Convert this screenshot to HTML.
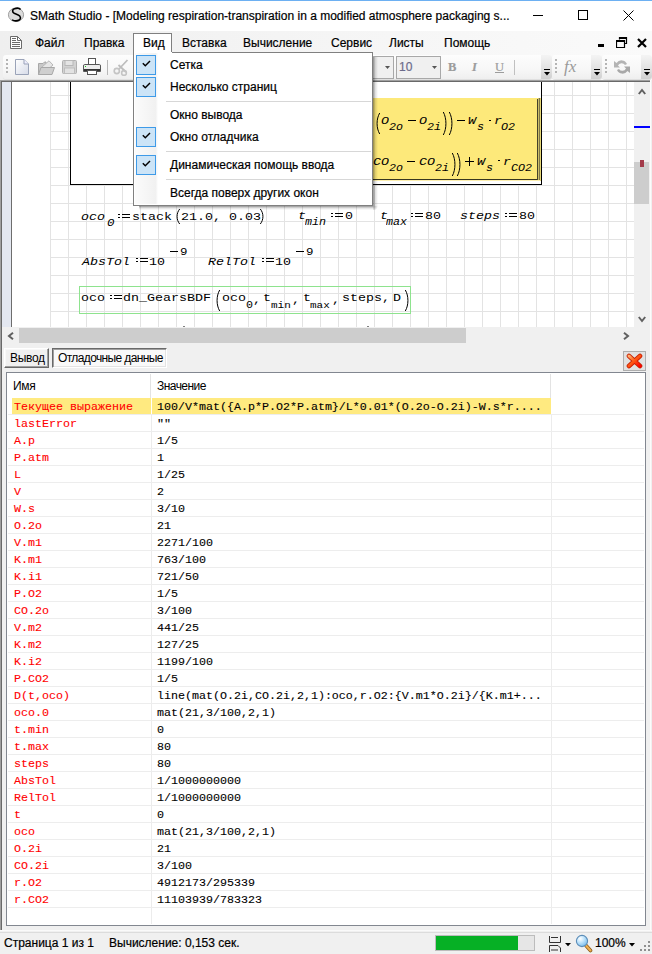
<!DOCTYPE html><html><head><meta charset="utf-8"><style>
*{box-sizing:border-box}
html,body{margin:0;padding:0}
body{width:652px;height:954px;position:relative;overflow:hidden;background:#f0f0f0;font-family:"Liberation Sans",sans-serif;font-size:12px;color:#000}
.a{position:absolute}
.t{position:absolute;white-space:pre;line-height:0;height:0;-webkit-text-stroke:0.2px currentColor}
.m{font-family:"Liberation Mono",monospace;-webkit-text-stroke:0}
.i{font-style:italic}
</style></head><body>
<div class="a" style="left:0px;top:0px;width:652px;height:31px;background:#fff;"></div>
<div class="a" style="left:0px;top:0px;width:652px;height:1px;background:#6db0f2;"></div>
<svg class="a" style="left:7px;top:7px" width="18" height="16" viewBox="0 0 18 16"><ellipse cx="9" cy="7.8" rx="7.6" ry="6.8" fill="#dcdcdc" stroke="#a0a0a0" stroke-width="1"/><path d="M13.6 2.4 C12.6 1.2 9.5 1 7.4 1.7 C5.2 2.5 4.9 5.2 7.2 6.3 L11.2 7.9 C13.9 9 14 12 12.2 13 C10.6 13.9 7.2 14 5 12.9" fill="none" stroke="#000" stroke-width="1.6"/></svg>
<div class="t " style="left:30px;top:15.84px;font-size:12px;">SMath Studio - [Modeling respiration-transpiration in a modified atmosphere packaging s...</div>
<div class="a" style="left:533px;top:15px;width:10px;height:1px;background:#000;"></div>
<div class="a" style="left:578px;top:10px;width:10px;height:10px;border:1px solid #000"></div>
<svg class="a" style="left:623px;top:10px" width="11" height="11" viewBox="0 0 11 11"><path d="M0.5 0.5 L10.5 10.5 M10.5 0.5 L0.5 10.5" stroke="#000" stroke-width="1"/></svg>
<div class="a" style="left:0px;top:31px;width:652px;height:49px;background:linear-gradient(to right,#efefef,#f6f6f6 60%,#fafafa);"></div>
<svg class="a" style="left:10px;top:36px" width="12" height="13" viewBox="0 0 12 13"><path d="M0.5 0.5 H7.5 L11.5 4.5 V12.5 H0.5 Z" fill="#fff" stroke="#6b6b6b"/><path d="M7.5 0.5 V4.5 H11.5" fill="none" stroke="#6b6b6b"/><path d="M2 2.5 H6 M2 4.5 H6 M2 6.5 H10 M2 8.5 H10 M2 10.5 H10" stroke="#6b6b6b"/></svg>
<div class="t " style="left:35px;top:42.84px;font-size:12px;">Файл</div>
<div class="t " style="left:84px;top:42.84px;font-size:12px;">Правка</div>
<div class="t " style="left:182px;top:42.84px;font-size:12px;">Вставка</div>
<div class="t " style="left:243px;top:42.84px;font-size:12px;">Вычисление</div>
<div class="t " style="left:331px;top:42.84px;font-size:12px;">Сервис</div>
<div class="t " style="left:389px;top:42.84px;font-size:12px;">Листы</div>
<div class="t " style="left:444px;top:42.84px;font-size:12px;">Помощь</div>
<div class="a" style="left:598px;top:44px;width:6px;height:3px;background:#000;"></div>
<svg class="a" style="left:616px;top:37px" width="12" height="11" viewBox="0 0 12 11"><path d="M3.5 2.5 V0.5 H10.5 V6.5 H8.5 M0.5 3.5 H8.5 V10.5 H0.5 Z M0.5 4.5 H8.5 M3.5 1.5 H10.5" fill="none" stroke="#000" stroke-width="1.2"/></svg>
<svg class="a" style="left:637px;top:38px" width="10" height="10" viewBox="0 0 10 10"><path d="M1 1 L9 9 M9 1 L1 9" stroke="#000" stroke-width="2.2"/></svg>
<div class="a" style="left:3px;top:55px;width:549px;height:24px;background:linear-gradient(#fdfdfd,#f7f7f7 60%,#efefef);border-radius:3px 3px 3px 3px;box-shadow:0 1px 0 #e0e0e0"></div>
<div class="a" style="left:541px;top:55px;width:11px;height:24px;background:linear-gradient(#f4f4f4,#dedede 70%,#cfcfcf);border-radius:0 3px 3px 0"></div>
<div class="a" style="left:544px;top:69px;width:6px;height:1px;background:#000;"></div>
<svg class="a" style="left:544px;top:72px" width="6" height="4" viewBox="0 0 6 4"><path d="M0 0 H6 L3 3.5Z" fill="#000"/></svg>
<div class="a" style="left:552px;top:55px;width:50px;height:24px;background:linear-gradient(#fdfdfd,#f7f7f7 60%,#efefef);border-radius:3px 3px 3px 3px;box-shadow:0 1px 0 #e0e0e0"></div>
<div class="a" style="left:591px;top:55px;width:11px;height:24px;background:linear-gradient(#f4f4f4,#dedede 70%,#cfcfcf);border-radius:0 3px 3px 0"></div>
<div class="a" style="left:594px;top:69px;width:6px;height:1px;background:#000;"></div>
<svg class="a" style="left:594px;top:72px" width="6" height="4" viewBox="0 0 6 4"><path d="M0 0 H6 L3 3.5Z" fill="#000"/></svg>
<div class="a" style="left:602px;top:55px;width:50px;height:24px;background:linear-gradient(#fdfdfd,#f7f7f7 60%,#efefef);border-radius:3px 3px 3px 3px;box-shadow:0 1px 0 #e0e0e0"></div>
<div class="a" style="left:641px;top:55px;width:11px;height:24px;background:linear-gradient(#f4f4f4,#dedede 70%,#cfcfcf);border-radius:0 3px 3px 0"></div>
<div class="a" style="left:644px;top:69px;width:6px;height:1px;background:#000;"></div>
<svg class="a" style="left:644px;top:72px" width="6" height="4" viewBox="0 0 6 4"><path d="M0 0 H6 L3 3.5Z" fill="#000"/></svg>
<div class="a" style="left:6px;top:59px;width:2px;height:2px;background:#b4b4b4;"></div>
<div class="a" style="left:6px;top:63px;width:2px;height:2px;background:#b4b4b4;"></div>
<div class="a" style="left:6px;top:67px;width:2px;height:2px;background:#b4b4b4;"></div>
<div class="a" style="left:6px;top:71px;width:2px;height:2px;background:#b4b4b4;"></div>
<div class="a" style="left:555px;top:59px;width:2px;height:2px;background:#b4b4b4;"></div>
<div class="a" style="left:555px;top:63px;width:2px;height:2px;background:#b4b4b4;"></div>
<div class="a" style="left:555px;top:67px;width:2px;height:2px;background:#b4b4b4;"></div>
<div class="a" style="left:555px;top:71px;width:2px;height:2px;background:#b4b4b4;"></div>
<div class="a" style="left:605px;top:59px;width:2px;height:2px;background:#b4b4b4;"></div>
<div class="a" style="left:605px;top:63px;width:2px;height:2px;background:#b4b4b4;"></div>
<div class="a" style="left:605px;top:67px;width:2px;height:2px;background:#b4b4b4;"></div>
<div class="a" style="left:605px;top:71px;width:2px;height:2px;background:#b4b4b4;"></div>
<svg class="a" style="left:15px;top:59px" width="15" height="17" viewBox="0 0 15 17"><defs><linearGradient id="gd" x1="0" y1="0" x2="1" y2="1"><stop offset="0" stop-color="#fff"/><stop offset="1" stop-color="#d6dbe8"/></linearGradient></defs><path d="M0.5 0.5 H9 L13.5 5 V15.5 H0.5 Z" fill="url(#gd)" stroke="#9aa3b8"/><path d="M9 0.5 V5 H13.5" fill="#eef" stroke="#9aa3b8"/></svg>
<svg class="a" style="left:38px;top:60px" width="17" height="15" viewBox="0 0 17 15"><path d="M0.5 3.5 H5 L6.5 2 H8 V14.5 H0.5 Z" fill="#c8c8c8" stroke="#a8a8a8"/><path d="M4 7 L11 0.8 L15 5 L8 11 Z" fill="#e6e6e6" stroke="#b8b8b8"/><path d="M0.5 14.5 L3 7.5 H16.5 L14 14.5 Z" fill="#cfcfcf" stroke="#a8a8a8"/></svg>
<svg class="a" style="left:62px;top:60px" width="15" height="14" viewBox="0 0 15 14"><rect x="0.5" y="0.5" width="14" height="13" rx="1" fill="#d2d2d2" stroke="#b0b0b0"/><rect x="3" y="0.5" width="8" height="5" fill="#e4e4e4" stroke="#b8b8b8"/><rect x="2.5" y="8" width="10" height="5.5" fill="#e2e2e2" stroke="#bdbdbd"/></svg>
<svg class="a" style="left:83px;top:58px" width="18" height="17" viewBox="0 0 18 17"><rect x="5.5" y="0.5" width="7" height="6" fill="#fff" stroke="#555"/><path d="M1.5 6.5 H16.5 Q17.5 6.5 17.5 8 V13.5 H0.5 V8 Q0.5 6.5 1.5 6.5 Z" fill="#ececec" stroke="#555"/><rect x="1" y="11" width="16" height="2" fill="#333"/><rect x="4.5" y="12.5" width="9" height="4" fill="#fff" stroke="#555"/><rect x="2" y="8" width="1" height="1" fill="#1c1"/></svg>
<div class="a" style="left:107px;top:60px;width:1px;height:15px;background:#b8b8b8;"></div>
<svg class="a" style="left:113px;top:59px" width="16" height="17" viewBox="0 0 16 17"><path d="M6 10 L14.5 1 M5.5 6 L13 13" stroke="#bdbdbd" stroke-width="1.8" fill="none"/><circle cx="3.8" cy="12" r="2.6" fill="none" stroke="#c4c4c4" stroke-width="1.6"/><circle cx="11" cy="14" r="2.4" fill="none" stroke="#c4c4c4" stroke-width="1.6"/></svg>
<div class="a" style="left:372px;top:56px;width:22px;height:23px;background:#f0f0f0;border:1px solid #a8a8a8;border-left:none"></div>
<svg class="a" style="left:385px;top:66px" width="5" height="3" viewBox="0 0 5 3"><path d="M0 0 H5 L2.5 3Z" fill="#555"/></svg>
<div class="a" style="left:396px;top:56px;width:45px;height:23px;background:#f0f0f0;border:1px solid #a8a8a8"></div>
<div class="t " style="left:399px;top:66.84px;font-size:12px;color:#6a6a8a">10</div>
<svg class="a" style="left:432px;top:66px" width="5" height="3" viewBox="0 0 5 3"><path d="M0 0 H5 L2.5 3Z" fill="#555"/></svg>
<div class="t " style="left:448px;top:66.67px;font-size:12.5px;color:#9c9c9c;font-weight:bold;font-family:Liberation Serif">B</div>
<div class="t " style="left:472px;top:66.67px;font-size:12.5px;color:#9c9c9c;font-style:italic;font-weight:bold;font-family:Liberation Serif">I</div>
<div class="t " style="left:495px;top:66.67px;font-size:12.5px;color:#9c9c9c;font-family:Liberation Serif">U</div>
<div class="a" style="left:495px;top:72px;width:9px;height:1px;background:#9c9c9c;"></div>
<div class="a" style="left:514px;top:60px;width:1px;height:15px;background:#c0c0c0;"></div>
<div class="t " style="left:564px;top:67.11px;font-size:17px;color:#9a9a9a;font-style:italic;font-family:Liberation Serif;-webkit-text-stroke:0">fx</div>
<svg class="a" style="left:613px;top:59px" width="18" height="16" viewBox="0 0 18 16"><path d="M14 5 A6 6 0 0 0 3.5 4 L1 2 V8.5 H7 L5 6.5 A4 4 0 0 1 12 6 Z" fill="#b4b4b4"/><path d="M4 11 A6 6 0 0 0 14.5 12 L17 14 V7.5 H11 L13 9.5 A4 4 0 0 1 6 10 Z" fill="#a8a8a8"/></svg>
<div class="a" style="left:0px;top:80px;width:652px;height:247px;background:#f0f0f0;"></div>
<div class="a" style="left:0px;top:80px;width:652px;height:1px;background:#a0a0a0;"></div>
<div class="a" style="left:0px;top:81px;width:652px;height:1px;background:#696969;"></div>
<div class="a" style="left:0px;top:80px;width:1px;height:850px;background:#a0a0a0;"></div>
<div class="a" style="left:1px;top:81px;width:1px;height:849px;background:#696969;"></div>
<div class="a" style="left:2px;top:82px;width:9px;height:245px;background:#e3e7f0;"></div>
<div class="a" style="left:11px;top:82px;width:1px;height:245px;background:#6d6d6d;"></div>
<div class="a" style="left:12px;top:82px;width:622px;height:245px;background-color:#fff;background-image:linear-gradient(to right,#e3e3e3 1px,transparent 1px),linear-gradient(to bottom,#e3e3e3 1px,transparent 1px);background-size:18px 18px;background-position:2px 13px;"></div>
<div class="a" style="left:12px;top:82px;width:38px;height:245px;background:#fff;"></div>
<div class="a" style="left:70px;top:82px;width:472px;height:103px;background:#fff;border:1px solid #000;border-top:none"></div>
<div class="a" style="left:300px;top:98px;width:241px;height:83px;background:#fde97a;"></div>
<div class="a" style="left:300px;top:180px;width:241px;height:1px;background:#fdf0b0;"></div>
<div class="a" style="left:300px;top:179px;width:238px;height:1px;background:#38361f;"></div>
<div class="a" style="left:537px;top:99px;width:1px;height:81px;background:#45422a;"></div>
<div class="a" style="left:538px;top:98px;width:1px;height:82px;background:#c9bd6a;"></div>
<div class="a" style="left:539px;top:98px;width:1px;height:82px;background:#7d7648;"></div>
<div class="a" style="left:540px;top:98px;width:1px;height:83px;background:#e8d978;"></div>
<svg class="a" style="left:376px;top:113px" width="4" height="21" viewBox="0 0 4 21"><path d="M3.7 0 C0.2 5.9 0.2 15.1 3.7 21" fill="none" stroke="#000" stroke-width="1.0"/></svg>
<div class="t m i" style="left:381px;top:121.00px;font-size:13.33px;transform:scaleY(0.88);transform-origin:0 3.00px;">O</div>
<div class="t m i" style="left:389px;top:127.37px;font-size:11.67px;transform:scaleY(0.88);transform-origin:0 2.63px;">2o</div>
<div class="a" style="left:408px;top:120px;width:8px;height:1px;background:#000;"></div>
<div class="t m i" style="left:419px;top:121.00px;font-size:13.33px;transform:scaleY(0.88);transform-origin:0 3.00px;">O</div>
<div class="t m i" style="left:427px;top:127.37px;font-size:11.67px;transform:scaleY(0.88);transform-origin:0 2.63px;">2i</div>
<svg class="a" style="left:443px;top:112px" width="4" height="23" viewBox="0 0 4 23"><path d="M0.3 0 C3.8 6.4 3.8 16.6 0.3 23" fill="none" stroke="#000" stroke-width="1.0"/></svg>
<svg class="a" style="left:449px;top:112px" width="4" height="23" viewBox="0 0 4 23"><path d="M0.3 0 C3.8 6.4 3.8 16.6 0.3 23" fill="none" stroke="#000" stroke-width="1.0"/></svg>
<div class="a" style="left:457px;top:120px;width:8px;height:1px;background:#000;"></div>
<div class="t m i" style="left:468px;top:121.00px;font-size:13.33px;transform:scaleY(0.88);transform-origin:0 3.00px;">W</div>
<div class="t m i" style="left:477px;top:127.37px;font-size:11.67px;transform:scaleY(0.88);transform-origin:0 2.63px;">s</div>
<div class="a" style="left:489px;top:120px;width:2px;height:1px;background:#000;"></div>
<div class="t m i" style="left:494px;top:121.00px;font-size:13.33px;transform:scaleY(0.88);transform-origin:0 3.00px;">r</div>
<div class="t m i" style="left:501px;top:127.37px;font-size:11.67px;transform:scaleY(0.88);transform-origin:0 2.63px;">O2</div>
<div class="t m i" style="left:373px;top:162.00px;font-size:13.33px;transform:scaleY(0.88);transform-origin:0 3.00px;">CO</div>
<div class="t m i" style="left:389px;top:167.87px;font-size:11.67px;transform:scaleY(0.88);transform-origin:0 2.63px;">2o</div>
<div class="a" style="left:407px;top:161px;width:8px;height:1px;background:#000;"></div>
<div class="t m i" style="left:419px;top:162.00px;font-size:13.33px;transform:scaleY(0.88);transform-origin:0 3.00px;">CO</div>
<div class="t m i" style="left:435px;top:167.87px;font-size:11.67px;transform:scaleY(0.88);transform-origin:0 2.63px;">2i</div>
<svg class="a" style="left:452px;top:153px" width="4" height="23" viewBox="0 0 4 23"><path d="M0.3 0 C3.8 6.4 3.8 16.6 0.3 23" fill="none" stroke="#000" stroke-width="1.0"/></svg>
<svg class="a" style="left:457px;top:153px" width="4" height="23" viewBox="0 0 4 23"><path d="M0.3 0 C3.8 6.4 3.8 16.6 0.3 23" fill="none" stroke="#000" stroke-width="1.0"/></svg>
<div class="a" style="left:465px;top:161px;width:9px;height:1px;background:#000;"></div>
<div class="a" style="left:469px;top:157px;width:1px;height:9px;background:#000;"></div>
<div class="t m i" style="left:477px;top:162.00px;font-size:13.33px;transform:scaleY(0.88);transform-origin:0 3.00px;">W</div>
<div class="t m i" style="left:486px;top:167.87px;font-size:11.67px;transform:scaleY(0.88);transform-origin:0 2.63px;">s</div>
<div class="a" style="left:498px;top:160px;width:2px;height:1px;background:#000;"></div>
<div class="t m i" style="left:503px;top:162.00px;font-size:13.33px;transform:scaleY(0.88);transform-origin:0 3.00px;">r</div>
<div class="t m i" style="left:511px;top:167.87px;font-size:11.67px;transform:scaleY(0.88);transform-origin:0 2.63px;">CO2</div>
<div class="t m i" style="left:81px;top:217.00px;font-size:13.33px;transform:scaleY(0.88);transform-origin:0 3.00px;">oco</div>
<div class="t m i" style="left:107px;top:223.19px;font-size:12.5px;transform:scaleY(0.88);transform-origin:0 2.81px;">0</div>
<div class="a" style="left:118px;top:214px;width:2px;height:1px;background:#000;"></div>
<div class="a" style="left:122px;top:214px;width:8px;height:1px;background:#000;"></div>
<div class="a" style="left:118px;top:217px;width:2px;height:1px;background:#000;"></div>
<div class="a" style="left:122px;top:217px;width:8px;height:1px;background:#000;"></div>
<div class="t m" style="left:132px;top:217.00px;font-size:13.33px;transform:scaleY(0.88);transform-origin:0 3.00px;">stack</div>
<svg class="a" style="left:176px;top:209px" width="4" height="15" viewBox="0 0 4 15"><path d="M3.7 0 C0.2 4.2 0.2 10.8 3.7 15" fill="none" stroke="#000" stroke-width="1.0"/></svg>
<div class="t m" style="left:181px;top:217.00px;font-size:13.33px;transform:scaleY(0.88);transform-origin:0 3.00px;">21.0, 0.03</div>
<svg class="a" style="left:260px;top:209px" width="4" height="15" viewBox="0 0 4 15"><path d="M0.3 0 C3.8 4.2 3.8 10.8 0.3 15" fill="none" stroke="#000" stroke-width="1.0"/></svg>
<div class="t m i" style="left:298px;top:216.00px;font-size:13.33px;transform:scaleY(0.88);transform-origin:0 3.00px;">t</div>
<div class="t m i" style="left:305px;top:221.87px;font-size:11.67px;transform:scaleY(0.88);transform-origin:0 2.63px;">min</div>
<div class="a" style="left:331px;top:213px;width:2px;height:1px;background:#000;"></div>
<div class="a" style="left:335px;top:213px;width:8px;height:1px;background:#000;"></div>
<div class="a" style="left:331px;top:216px;width:2px;height:1px;background:#000;"></div>
<div class="a" style="left:335px;top:216px;width:8px;height:1px;background:#000;"></div>
<div class="t m" style="left:345px;top:216.00px;font-size:13.33px;transform:scaleY(0.88);transform-origin:0 3.00px;">0</div>
<div class="t m i" style="left:380px;top:216.00px;font-size:13.33px;transform:scaleY(0.88);transform-origin:0 3.00px;">t</div>
<div class="t m i" style="left:386px;top:221.87px;font-size:11.67px;transform:scaleY(0.88);transform-origin:0 2.63px;">max</div>
<div class="a" style="left:411px;top:213px;width:2px;height:1px;background:#000;"></div>
<div class="a" style="left:415px;top:213px;width:8px;height:1px;background:#000;"></div>
<div class="a" style="left:411px;top:216px;width:2px;height:1px;background:#000;"></div>
<div class="a" style="left:415px;top:216px;width:8px;height:1px;background:#000;"></div>
<div class="t m" style="left:425px;top:216.00px;font-size:13.33px;transform:scaleY(0.88);transform-origin:0 3.00px;">80</div>
<div class="t m i" style="left:460px;top:216.00px;font-size:13.33px;transform:scaleY(0.88);transform-origin:0 3.00px;">steps</div>
<div class="a" style="left:505px;top:213px;width:2px;height:1px;background:#000;"></div>
<div class="a" style="left:509px;top:213px;width:8px;height:1px;background:#000;"></div>
<div class="a" style="left:505px;top:216px;width:2px;height:1px;background:#000;"></div>
<div class="a" style="left:509px;top:216px;width:8px;height:1px;background:#000;"></div>
<div class="t m" style="left:519px;top:216.00px;font-size:13.33px;transform:scaleY(0.88);transform-origin:0 3.00px;">80</div>
<div class="t m i" style="left:82px;top:262.00px;font-size:13.33px;transform:scaleY(0.88);transform-origin:0 3.00px;">AbsTol</div>
<div class="a" style="left:136px;top:258px;width:2px;height:1px;background:#000;"></div>
<div class="a" style="left:140px;top:258px;width:8px;height:1px;background:#000;"></div>
<div class="a" style="left:136px;top:261px;width:2px;height:1px;background:#000;"></div>
<div class="a" style="left:140px;top:261px;width:8px;height:1px;background:#000;"></div>
<div class="t m" style="left:149px;top:262.00px;font-size:13.33px;transform:scaleY(0.88);transform-origin:0 3.00px;">10</div>
<div class="a" style="left:170px;top:251px;width:8px;height:1px;background:#000;"></div>
<div class="t m" style="left:180px;top:252.19px;font-size:12.5px;transform:scaleY(0.88);transform-origin:0 2.81px;">9</div>
<div class="t m i" style="left:208px;top:262.00px;font-size:13.33px;transform:scaleY(0.88);transform-origin:0 3.00px;">RelTol</div>
<div class="a" style="left:262px;top:258px;width:2px;height:1px;background:#000;"></div>
<div class="a" style="left:266px;top:258px;width:8px;height:1px;background:#000;"></div>
<div class="a" style="left:262px;top:261px;width:2px;height:1px;background:#000;"></div>
<div class="a" style="left:266px;top:261px;width:8px;height:1px;background:#000;"></div>
<div class="t m" style="left:275px;top:262.00px;font-size:13.33px;transform:scaleY(0.88);transform-origin:0 3.00px;">10</div>
<div class="a" style="left:296px;top:251px;width:8px;height:1px;background:#000;"></div>
<div class="t m" style="left:306px;top:252.19px;font-size:12.5px;transform:scaleY(0.88);transform-origin:0 2.81px;">9</div>
<div class="a" style="left:79px;top:286px;width:332px;height:28px;border:1px solid #8ee38e"></div>
<div class="t m" style="left:81px;top:298.00px;font-size:13.33px;transform:scaleY(0.88);transform-origin:0 3.00px;">oco</div>
<div class="a" style="left:110px;top:295px;width:2px;height:1px;background:#000;"></div>
<div class="a" style="left:114px;top:295px;width:8px;height:1px;background:#000;"></div>
<div class="a" style="left:110px;top:298px;width:2px;height:1px;background:#000;"></div>
<div class="a" style="left:114px;top:298px;width:8px;height:1px;background:#000;"></div>
<div class="t m" style="left:123px;top:298.00px;font-size:13.33px;transform:scaleY(0.88);transform-origin:0 3.00px;">dn_GearsBDF</div>
<svg class="a" style="left:216px;top:290px" width="4" height="21" viewBox="0 0 4 21"><path d="M3.7 0 C0.2 5.9 0.2 15.1 3.7 21" fill="none" stroke="#000" stroke-width="1.0"/></svg>
<div class="t m" style="left:222px;top:298.00px;font-size:13.33px;transform:scaleY(0.88);transform-origin:0 3.00px;">oco</div>
<div class="t m" style="left:246px;top:304.87px;font-size:11.67px;transform:scaleY(0.88);transform-origin:0 2.63px;">0</div>
<div class="t m" style="left:253px;top:299.50px;font-size:13.33px;transform:scaleY(0.88);transform-origin:0 3.00px;">,</div>
<div class="t m" style="left:263px;top:298.00px;font-size:13.33px;transform:scaleY(0.88);transform-origin:0 3.00px;">t</div>
<div class="t m" style="left:271px;top:304.52px;font-size:11px;transform:scaleY(0.88);transform-origin:0 2.48px;">min</div>
<div class="t m" style="left:292px;top:299.50px;font-size:13.33px;transform:scaleY(0.88);transform-origin:0 3.00px;">,</div>
<div class="t m" style="left:303px;top:298.00px;font-size:13.33px;transform:scaleY(0.88);transform-origin:0 3.00px;">t</div>
<div class="t m" style="left:310px;top:304.52px;font-size:11px;transform:scaleY(0.88);transform-origin:0 2.48px;">max</div>
<div class="t m" style="left:332px;top:299.50px;font-size:13.33px;transform:scaleY(0.88);transform-origin:0 3.00px;">,</div>
<div class="t m" style="left:342px;top:298.00px;font-size:13.33px;transform:scaleY(0.88);transform-origin:0 3.00px;">steps,</div>
<div class="t m" style="left:393px;top:298.00px;font-size:13.33px;transform:scaleY(0.88);transform-origin:0 3.00px;">D</div>
<svg class="a" style="left:405px;top:290px" width="4" height="21" viewBox="0 0 4 21"><path d="M0.3 0 C3.8 5.9 3.8 15.1 0.3 21" fill="none" stroke="#000" stroke-width="1.0"/></svg>
<div class="a" style="left:183px;top:326px;width:2px;height:1px;background:#808080;"></div>
<div class="a" style="left:367px;top:326px;width:2px;height:1px;background:#808080;"></div>
<div class="a" style="left:634px;top:82px;width:17px;height:245px;background:#f0f0f0;"></div>
<div class="a" style="left:634px;top:126px;width:17px;height:2px;background:#0000ff;"></div>
<div class="a" style="left:634px;top:162px;width:15px;height:42px;background:#cdcdcd;"></div>
<div class="a" style="left:640px;top:160px;width:4px;height:7px;background:#a33a4a;"></div>
<svg class="a" style="left:638px;top:88px" width="8" height="7" viewBox="0 0 8 7"><path d="M0.8 6 L4 2 L7.2 6" fill="none" stroke="#606060" stroke-width="2"/></svg>
<svg class="a" style="left:638px;top:316px" width="8" height="7" viewBox="0 0 8 7"><path d="M0.8 1 L4 5 L7.2 1" fill="none" stroke="#606060" stroke-width="2"/></svg>
<div class="a" style="left:2px;top:327px;width:632px;height:17px;background:#f0f0f0;"></div>
<div class="a" style="left:19px;top:328px;width:447px;height:15px;background:#cdcdcd;"></div>
<svg class="a" style="left:7px;top:332px" width="7" height="8" viewBox="0 0 7 8"><path d="M6 0.8 L2 4 L6 7.2" fill="none" stroke="#606060" stroke-width="2"/></svg>
<svg class="a" style="left:623px;top:332px" width="7" height="8" viewBox="0 0 7 8"><path d="M1 0.8 L5 4 L1 7.2" fill="none" stroke="#606060" stroke-width="2"/></svg>
<div class="a" style="left:650px;top:80px;width:2px;height:851px;background:#f0f0f0;border-left:1px solid #fcfcfc"></div>
<div class="a" style="left:4px;top:348px;width:45px;height:20px;background:#f0f0f0;border:1px solid;border-color:#fff #696969 #696969 #fff;box-shadow:inset -1px -1px 0 #a0a0a0, inset 1px 1px 0 #f8f8f8"></div>
<div class="t " style="left:10px;top:357.84px;font-size:12px;letter-spacing:-0.3px;-webkit-text-stroke:0">Вывод</div>
<div class="a" style="left:52px;top:348px;width:115px;height:20px;background:#f9f9f9;border:1px solid;border-color:#696969 #fff #fff #696969;box-shadow:inset 1px 1px 0 #a0a0a0, inset -1px -1px 0 #e3e3e3"></div>
<div class="t " style="left:58px;top:357.84px;font-size:12px;letter-spacing:-0.62px;-webkit-text-stroke:0">Отладочные данные</div>
<div class="a" style="left:623px;top:351px;width:23px;height:20px;background:#e1e1e1;border:1px solid #adadad"></div>
<svg class="a" style="left:626px;top:353px" width="17" height="16" viewBox="0 0 17 16"><defs><linearGradient id="xg" x1="0" y1="0" x2="1" y2="1"><stop offset="0" stop-color="#ffb070"/><stop offset="0.45" stop-color="#ff5a14"/><stop offset="1" stop-color="#ff0000"/></linearGradient></defs><path d="M3 3 L14 13 M14 3 L3 13" stroke="#c81e00" stroke-width="4.6" stroke-linecap="round"/><path d="M3 3 L14 13 M14 3 L3 13" stroke="url(#xg)" stroke-width="3" stroke-linecap="round"/></svg>
<div class="a" style="left:6px;top:372px;width:640px;height:554px;background:#fff;border:1px solid #828790"></div>
<div class="t " style="left:13px;top:385.84px;font-size:12px;letter-spacing:-0.3px;-webkit-text-stroke:0">Имя</div>
<div class="t " style="left:157px;top:385.84px;font-size:12px;letter-spacing:-0.55px;-webkit-text-stroke:0">Значение</div>
<div class="a" style="left:150px;top:374px;width:1px;height:24px;background:#e3e3e3;"></div>
<div class="a" style="left:151px;top:414px;width:1px;height:510px;background:#ececec;"></div>
<div class="a" style="left:550px;top:374px;width:1px;height:24px;background:#e3e3e3;"></div>
<div class="a" style="left:551px;top:414px;width:1px;height:510px;background:#ececec;"></div>
<div class="a" style="left:12px;top:398px;width:139px;height:16px;background:#ffea80;"></div>
<div class="a" style="left:152px;top:398px;width:399px;height:16px;background:#ffea80;"></div>
<div class="a" style="left:8px;top:414px;width:636px;height:1px;background:#ededed;"></div>
<div class="t m tb" style="left:14px;top:407.37px;font-size:11.67px;transform:scaleY(0.88);transform-origin:0 2.63px;color:#ff0000;-webkit-text-stroke:0.1px #ff0000">Текущее выражение</div>
<div class="t m tb" style="left:157px;top:407.37px;font-size:11.67px;transform:scaleY(0.88);transform-origin:0 2.63px;-webkit-text-stroke:0.1px #000">100/V*mat({A.p*P.O2*P.atm}/L*0.01*(O.2o-O.2i)-W.s*r....</div>
<div class="a" style="left:8px;top:431px;width:636px;height:1px;background:#ededed;"></div>
<div class="t m tb" style="left:14px;top:424.37px;font-size:11.67px;transform:scaleY(0.88);transform-origin:0 2.63px;color:#ff0000;-webkit-text-stroke:0.1px #ff0000">lastError</div>
<div class="t m tb" style="left:157px;top:424.37px;font-size:11.67px;transform:scaleY(0.88);transform-origin:0 2.63px;-webkit-text-stroke:0.1px #000">&quot;&quot;</div>
<div class="a" style="left:8px;top:448px;width:636px;height:1px;background:#ededed;"></div>
<div class="t m tb" style="left:14px;top:441.37px;font-size:11.67px;transform:scaleY(0.88);transform-origin:0 2.63px;color:#ff0000;-webkit-text-stroke:0.1px #ff0000">A.p</div>
<div class="t m tb" style="left:157px;top:441.37px;font-size:11.67px;transform:scaleY(0.88);transform-origin:0 2.63px;-webkit-text-stroke:0.1px #000">1/5</div>
<div class="a" style="left:8px;top:465px;width:636px;height:1px;background:#ededed;"></div>
<div class="t m tb" style="left:14px;top:458.37px;font-size:11.67px;transform:scaleY(0.88);transform-origin:0 2.63px;color:#ff0000;-webkit-text-stroke:0.1px #ff0000">P.atm</div>
<div class="t m tb" style="left:157px;top:458.37px;font-size:11.67px;transform:scaleY(0.88);transform-origin:0 2.63px;-webkit-text-stroke:0.1px #000">1</div>
<div class="a" style="left:8px;top:482px;width:636px;height:1px;background:#ededed;"></div>
<div class="t m tb" style="left:14px;top:475.37px;font-size:11.67px;transform:scaleY(0.88);transform-origin:0 2.63px;color:#ff0000;-webkit-text-stroke:0.1px #ff0000">L</div>
<div class="t m tb" style="left:157px;top:475.37px;font-size:11.67px;transform:scaleY(0.88);transform-origin:0 2.63px;-webkit-text-stroke:0.1px #000">1/25</div>
<div class="a" style="left:8px;top:499px;width:636px;height:1px;background:#ededed;"></div>
<div class="t m tb" style="left:14px;top:492.37px;font-size:11.67px;transform:scaleY(0.88);transform-origin:0 2.63px;color:#ff0000;-webkit-text-stroke:0.1px #ff0000">V</div>
<div class="t m tb" style="left:157px;top:492.37px;font-size:11.67px;transform:scaleY(0.88);transform-origin:0 2.63px;-webkit-text-stroke:0.1px #000">2</div>
<div class="a" style="left:8px;top:516px;width:636px;height:1px;background:#ededed;"></div>
<div class="t m tb" style="left:14px;top:509.37px;font-size:11.67px;transform:scaleY(0.88);transform-origin:0 2.63px;color:#ff0000;-webkit-text-stroke:0.1px #ff0000">W.s</div>
<div class="t m tb" style="left:157px;top:509.37px;font-size:11.67px;transform:scaleY(0.88);transform-origin:0 2.63px;-webkit-text-stroke:0.1px #000">3/10</div>
<div class="a" style="left:8px;top:533px;width:636px;height:1px;background:#ededed;"></div>
<div class="t m tb" style="left:14px;top:526.37px;font-size:11.67px;transform:scaleY(0.88);transform-origin:0 2.63px;color:#ff0000;-webkit-text-stroke:0.1px #ff0000">O.2o</div>
<div class="t m tb" style="left:157px;top:526.37px;font-size:11.67px;transform:scaleY(0.88);transform-origin:0 2.63px;-webkit-text-stroke:0.1px #000">21</div>
<div class="a" style="left:8px;top:550px;width:636px;height:1px;background:#ededed;"></div>
<div class="t m tb" style="left:14px;top:543.37px;font-size:11.67px;transform:scaleY(0.88);transform-origin:0 2.63px;color:#ff0000;-webkit-text-stroke:0.1px #ff0000">V.m1</div>
<div class="t m tb" style="left:157px;top:543.37px;font-size:11.67px;transform:scaleY(0.88);transform-origin:0 2.63px;-webkit-text-stroke:0.1px #000">2271/100</div>
<div class="a" style="left:8px;top:567px;width:636px;height:1px;background:#ededed;"></div>
<div class="t m tb" style="left:14px;top:560.37px;font-size:11.67px;transform:scaleY(0.88);transform-origin:0 2.63px;color:#ff0000;-webkit-text-stroke:0.1px #ff0000">K.m1</div>
<div class="t m tb" style="left:157px;top:560.37px;font-size:11.67px;transform:scaleY(0.88);transform-origin:0 2.63px;-webkit-text-stroke:0.1px #000">763/100</div>
<div class="a" style="left:8px;top:584px;width:636px;height:1px;background:#ededed;"></div>
<div class="t m tb" style="left:14px;top:577.37px;font-size:11.67px;transform:scaleY(0.88);transform-origin:0 2.63px;color:#ff0000;-webkit-text-stroke:0.1px #ff0000">K.i1</div>
<div class="t m tb" style="left:157px;top:577.37px;font-size:11.67px;transform:scaleY(0.88);transform-origin:0 2.63px;-webkit-text-stroke:0.1px #000">721/50</div>
<div class="a" style="left:8px;top:601px;width:636px;height:1px;background:#ededed;"></div>
<div class="t m tb" style="left:14px;top:594.37px;font-size:11.67px;transform:scaleY(0.88);transform-origin:0 2.63px;color:#ff0000;-webkit-text-stroke:0.1px #ff0000">P.O2</div>
<div class="t m tb" style="left:157px;top:594.37px;font-size:11.67px;transform:scaleY(0.88);transform-origin:0 2.63px;-webkit-text-stroke:0.1px #000">1/5</div>
<div class="a" style="left:8px;top:618px;width:636px;height:1px;background:#ededed;"></div>
<div class="t m tb" style="left:14px;top:611.37px;font-size:11.67px;transform:scaleY(0.88);transform-origin:0 2.63px;color:#ff0000;-webkit-text-stroke:0.1px #ff0000">CO.2o</div>
<div class="t m tb" style="left:157px;top:611.37px;font-size:11.67px;transform:scaleY(0.88);transform-origin:0 2.63px;-webkit-text-stroke:0.1px #000">3/100</div>
<div class="a" style="left:8px;top:635px;width:636px;height:1px;background:#ededed;"></div>
<div class="t m tb" style="left:14px;top:628.37px;font-size:11.67px;transform:scaleY(0.88);transform-origin:0 2.63px;color:#ff0000;-webkit-text-stroke:0.1px #ff0000">V.m2</div>
<div class="t m tb" style="left:157px;top:628.37px;font-size:11.67px;transform:scaleY(0.88);transform-origin:0 2.63px;-webkit-text-stroke:0.1px #000">441/25</div>
<div class="a" style="left:8px;top:652px;width:636px;height:1px;background:#ededed;"></div>
<div class="t m tb" style="left:14px;top:645.37px;font-size:11.67px;transform:scaleY(0.88);transform-origin:0 2.63px;color:#ff0000;-webkit-text-stroke:0.1px #ff0000">K.m2</div>
<div class="t m tb" style="left:157px;top:645.37px;font-size:11.67px;transform:scaleY(0.88);transform-origin:0 2.63px;-webkit-text-stroke:0.1px #000">127/25</div>
<div class="a" style="left:8px;top:669px;width:636px;height:1px;background:#ededed;"></div>
<div class="t m tb" style="left:14px;top:662.37px;font-size:11.67px;transform:scaleY(0.88);transform-origin:0 2.63px;color:#ff0000;-webkit-text-stroke:0.1px #ff0000">K.i2</div>
<div class="t m tb" style="left:157px;top:662.37px;font-size:11.67px;transform:scaleY(0.88);transform-origin:0 2.63px;-webkit-text-stroke:0.1px #000">1199/100</div>
<div class="a" style="left:8px;top:686px;width:636px;height:1px;background:#ededed;"></div>
<div class="t m tb" style="left:14px;top:679.37px;font-size:11.67px;transform:scaleY(0.88);transform-origin:0 2.63px;color:#ff0000;-webkit-text-stroke:0.1px #ff0000">P.CO2</div>
<div class="t m tb" style="left:157px;top:679.37px;font-size:11.67px;transform:scaleY(0.88);transform-origin:0 2.63px;-webkit-text-stroke:0.1px #000">1/5</div>
<div class="a" style="left:8px;top:703px;width:636px;height:1px;background:#ededed;"></div>
<div class="t m tb" style="left:14px;top:696.37px;font-size:11.67px;transform:scaleY(0.88);transform-origin:0 2.63px;color:#ff0000;-webkit-text-stroke:0.1px #ff0000">D(t,oco)</div>
<div class="t m tb" style="left:157px;top:696.37px;font-size:11.67px;transform:scaleY(0.88);transform-origin:0 2.63px;-webkit-text-stroke:0.1px #000">line(mat(O.2i,CO.2i,2,1):oco,r.O2:{V.m1*O.2i}/{K.m1+...</div>
<div class="a" style="left:8px;top:720px;width:636px;height:1px;background:#ededed;"></div>
<div class="t m tb" style="left:14px;top:713.37px;font-size:11.67px;transform:scaleY(0.88);transform-origin:0 2.63px;color:#ff0000;-webkit-text-stroke:0.1px #ff0000">oco.0</div>
<div class="t m tb" style="left:157px;top:713.37px;font-size:11.67px;transform:scaleY(0.88);transform-origin:0 2.63px;-webkit-text-stroke:0.1px #000">mat(21,3/100,2,1)</div>
<div class="a" style="left:8px;top:737px;width:636px;height:1px;background:#ededed;"></div>
<div class="t m tb" style="left:14px;top:730.37px;font-size:11.67px;transform:scaleY(0.88);transform-origin:0 2.63px;color:#ff0000;-webkit-text-stroke:0.1px #ff0000">t.min</div>
<div class="t m tb" style="left:157px;top:730.37px;font-size:11.67px;transform:scaleY(0.88);transform-origin:0 2.63px;-webkit-text-stroke:0.1px #000">0</div>
<div class="a" style="left:8px;top:754px;width:636px;height:1px;background:#ededed;"></div>
<div class="t m tb" style="left:14px;top:747.37px;font-size:11.67px;transform:scaleY(0.88);transform-origin:0 2.63px;color:#ff0000;-webkit-text-stroke:0.1px #ff0000">t.max</div>
<div class="t m tb" style="left:157px;top:747.37px;font-size:11.67px;transform:scaleY(0.88);transform-origin:0 2.63px;-webkit-text-stroke:0.1px #000">80</div>
<div class="a" style="left:8px;top:771px;width:636px;height:1px;background:#ededed;"></div>
<div class="t m tb" style="left:14px;top:764.37px;font-size:11.67px;transform:scaleY(0.88);transform-origin:0 2.63px;color:#ff0000;-webkit-text-stroke:0.1px #ff0000">steps</div>
<div class="t m tb" style="left:157px;top:764.37px;font-size:11.67px;transform:scaleY(0.88);transform-origin:0 2.63px;-webkit-text-stroke:0.1px #000">80</div>
<div class="a" style="left:8px;top:788px;width:636px;height:1px;background:#ededed;"></div>
<div class="t m tb" style="left:14px;top:781.37px;font-size:11.67px;transform:scaleY(0.88);transform-origin:0 2.63px;color:#ff0000;-webkit-text-stroke:0.1px #ff0000">AbsTol</div>
<div class="t m tb" style="left:157px;top:781.37px;font-size:11.67px;transform:scaleY(0.88);transform-origin:0 2.63px;-webkit-text-stroke:0.1px #000">1/1000000000</div>
<div class="a" style="left:8px;top:805px;width:636px;height:1px;background:#ededed;"></div>
<div class="t m tb" style="left:14px;top:798.37px;font-size:11.67px;transform:scaleY(0.88);transform-origin:0 2.63px;color:#ff0000;-webkit-text-stroke:0.1px #ff0000">RelTol</div>
<div class="t m tb" style="left:157px;top:798.37px;font-size:11.67px;transform:scaleY(0.88);transform-origin:0 2.63px;-webkit-text-stroke:0.1px #000">1/1000000000</div>
<div class="a" style="left:8px;top:822px;width:636px;height:1px;background:#ededed;"></div>
<div class="t m tb" style="left:14px;top:815.37px;font-size:11.67px;transform:scaleY(0.88);transform-origin:0 2.63px;color:#ff0000;-webkit-text-stroke:0.1px #ff0000">t</div>
<div class="t m tb" style="left:157px;top:815.37px;font-size:11.67px;transform:scaleY(0.88);transform-origin:0 2.63px;-webkit-text-stroke:0.1px #000">0</div>
<div class="a" style="left:8px;top:839px;width:636px;height:1px;background:#ededed;"></div>
<div class="t m tb" style="left:14px;top:832.37px;font-size:11.67px;transform:scaleY(0.88);transform-origin:0 2.63px;color:#ff0000;-webkit-text-stroke:0.1px #ff0000">oco</div>
<div class="t m tb" style="left:157px;top:832.37px;font-size:11.67px;transform:scaleY(0.88);transform-origin:0 2.63px;-webkit-text-stroke:0.1px #000">mat(21,3/100,2,1)</div>
<div class="a" style="left:8px;top:856px;width:636px;height:1px;background:#ededed;"></div>
<div class="t m tb" style="left:14px;top:849.37px;font-size:11.67px;transform:scaleY(0.88);transform-origin:0 2.63px;color:#ff0000;-webkit-text-stroke:0.1px #ff0000">O.2i</div>
<div class="t m tb" style="left:157px;top:849.37px;font-size:11.67px;transform:scaleY(0.88);transform-origin:0 2.63px;-webkit-text-stroke:0.1px #000">21</div>
<div class="a" style="left:8px;top:873px;width:636px;height:1px;background:#ededed;"></div>
<div class="t m tb" style="left:14px;top:866.37px;font-size:11.67px;transform:scaleY(0.88);transform-origin:0 2.63px;color:#ff0000;-webkit-text-stroke:0.1px #ff0000">CO.2i</div>
<div class="t m tb" style="left:157px;top:866.37px;font-size:11.67px;transform:scaleY(0.88);transform-origin:0 2.63px;-webkit-text-stroke:0.1px #000">3/100</div>
<div class="a" style="left:8px;top:890px;width:636px;height:1px;background:#ededed;"></div>
<div class="t m tb" style="left:14px;top:883.37px;font-size:11.67px;transform:scaleY(0.88);transform-origin:0 2.63px;color:#ff0000;-webkit-text-stroke:0.1px #ff0000">r.O2</div>
<div class="t m tb" style="left:157px;top:883.37px;font-size:11.67px;transform:scaleY(0.88);transform-origin:0 2.63px;-webkit-text-stroke:0.1px #000">4912173/295339</div>
<div class="a" style="left:8px;top:907px;width:636px;height:1px;background:#ededed;"></div>
<div class="t m tb" style="left:14px;top:900.37px;font-size:11.67px;transform:scaleY(0.88);transform-origin:0 2.63px;color:#ff0000;-webkit-text-stroke:0.1px #ff0000">r.CO2</div>
<div class="t m tb" style="left:157px;top:900.37px;font-size:11.67px;transform:scaleY(0.88);transform-origin:0 2.63px;-webkit-text-stroke:0.1px #000">11103939/783323</div>
<div class="a" style="left:0px;top:930px;width:652px;height:24px;background:#f0f0f0;border-top:1px solid #fafafa"></div>
<div class="a" style="left:0px;top:932px;width:652px;height:1px;background:#dcdcdc;"></div>
<div class="t " style="left:4px;top:942.84px;font-size:12px;">Страница 1 из 1</div>
<div class="t " style="left:109px;top:942.84px;font-size:12px;">Вычисление: 0,153 сек.</div>
<div class="a" style="left:435px;top:935px;width:100px;height:16px;background:#e6e6e6;border:1px solid #bcbcbc"></div>
<div class="a" style="left:436px;top:936px;width:82px;height:14px;background:#06b025;"></div>
<svg class="a" style="left:548px;top:935px" width="14" height="17" viewBox="0 0 14 17"><path d="M1.5 1 V7.5 H12.5 V1 M3 2.5 H10 M1.5 17 V10.5 H10 L12.5 13 V17 M3 15 H10" fill="none" stroke="#333" stroke-width="1"/></svg>
<svg class="a" style="left:565px;top:943px" width="6" height="4" viewBox="0 0 6 4"><path d="M0 0 H6 L3 3.2Z" fill="#000"/></svg>
<svg class="a" style="left:575px;top:934px" width="18" height="19" viewBox="0 0 18 19"><defs><radialGradient id="lg" cx="0.35" cy="0.3" r="0.7"><stop offset="0" stop-color="#ffffff"/><stop offset="0.5" stop-color="#bfe3fb"/><stop offset="1" stop-color="#7fc0ee"/></radialGradient></defs><path d="M11 11.5 L15.5 16.5" stroke="#8a5a18" stroke-width="3.6" stroke-linecap="round"/><path d="M11 11.5 L15.5 16.5" stroke="#f0b050" stroke-width="2" stroke-linecap="round"/><circle cx="7" cy="7" r="5.6" fill="url(#lg)" stroke="#5c8db8" stroke-width="1.1"/></svg>
<div class="t " style="left:595px;top:942.84px;font-size:12px;">100%</div>
<svg class="a" style="left:629px;top:943px" width="6" height="4" viewBox="0 0 6 4"><path d="M0 0 H6 L3 3.5Z" fill="#000"/></svg>
<div class="a" style="left:648px;top:941px;width:2px;height:2px;background:#8f8f8f;"></div>
<div class="a" style="left:644px;top:945px;width:2px;height:2px;background:#8f8f8f;"></div>
<div class="a" style="left:648px;top:945px;width:2px;height:2px;background:#8f8f8f;"></div>
<div class="a" style="left:640px;top:949px;width:2px;height:2px;background:#8f8f8f;"></div>
<div class="a" style="left:644px;top:949px;width:2px;height:2px;background:#8f8f8f;"></div>
<div class="a" style="left:648px;top:949px;width:2px;height:2px;background:#8f8f8f;"></div>
<div class="a" style="left:133px;top:33px;width:39px;height:20px;background:#fff;border:1px solid #808080;border-bottom:none"></div>
<div class="t " style="left:143px;top:42.84px;font-size:12px;">Вид</div>
<div class="a" style="left:373px;top:57px;width:5px;height:149px;background:linear-gradient(to right,rgba(0,0,0,0.42),rgba(0,0,0,0.12) 50%,rgba(0,0,0,0));"></div>
<div class="a" style="left:139px;top:206px;width:234px;height:4px;background:linear-gradient(to bottom,rgba(0,0,0,0.42),rgba(0,0,0,0.12) 50%,rgba(0,0,0,0));"></div>
<div class="a" style="left:373px;top:206px;width:5px;height:4px;background:radial-gradient(circle at 0 0,rgba(0,0,0,0.4),rgba(0,0,0,0) 5px);"></div>
<div class="a" style="left:133px;top:52px;width:240px;height:154px;background:#fff;border:1px solid #808080"></div>
<div class="a" style="left:172px;top:52px;width:200px;height:1px;background:#808080;"></div>
<div class="a" style="left:135px;top:53px;width:23px;height:151px;background:linear-gradient(to right,#fbfbfb,#f1f1f1 90%,#fff);"></div>
<div class="a" style="left:134px;top:52px;width:38px;height:1px;background:#fff;"></div>
<div class="t " style="left:170px;top:64.84px;font-size:12px;">Сетка</div>
<div class="a" style="left:136px;top:55px;width:20px;height:20px;background:#cce4f7;border:1px solid #3d9ae8"></div>
<svg class="a" style="left:141px;top:60px" width="10" height="8" viewBox="0 0 10 8"><path d="M1.8 3.2 L4.3 5.8 L9 1" fill="none" stroke="#000" stroke-width="1.45"/></svg>
<div class="t " style="left:170px;top:86.84px;font-size:12px;">Несколько страниц</div>
<div class="a" style="left:136px;top:77px;width:20px;height:20px;background:#cce4f7;border:1px solid #3d9ae8"></div>
<svg class="a" style="left:141px;top:82px" width="10" height="8" viewBox="0 0 10 8"><path d="M1.8 3.2 L4.3 5.8 L9 1" fill="none" stroke="#000" stroke-width="1.45"/></svg>
<div class="t " style="left:170px;top:114.84px;font-size:12px;">Окно вывода</div>
<div class="t " style="left:170px;top:136.84px;font-size:12px;">Окно отладчика</div>
<div class="a" style="left:136px;top:127px;width:20px;height:20px;background:#cce4f7;border:1px solid #3d9ae8"></div>
<svg class="a" style="left:141px;top:132px" width="10" height="8" viewBox="0 0 10 8"><path d="M1.8 3.2 L4.3 5.8 L9 1" fill="none" stroke="#000" stroke-width="1.45"/></svg>
<div class="t " style="left:170px;top:164.84px;font-size:12px;">Динамическая помощь ввода</div>
<div class="a" style="left:136px;top:155px;width:20px;height:20px;background:#cce4f7;border:1px solid #3d9ae8"></div>
<svg class="a" style="left:141px;top:160px" width="10" height="8" viewBox="0 0 10 8"><path d="M1.8 3.2 L4.3 5.8 L9 1" fill="none" stroke="#000" stroke-width="1.45"/></svg>
<div class="t " style="left:170px;top:192.84px;font-size:12px;">Всегда поверх других окон</div>
<div class="a" style="left:166px;top:101px;width:205px;height:1px;background:#d7d7d7;"></div>
<div class="a" style="left:166px;top:151px;width:205px;height:1px;background:#d7d7d7;"></div>
<div class="a" style="left:166px;top:179px;width:205px;height:1px;background:#d7d7d7;"></div>
</body></html>
